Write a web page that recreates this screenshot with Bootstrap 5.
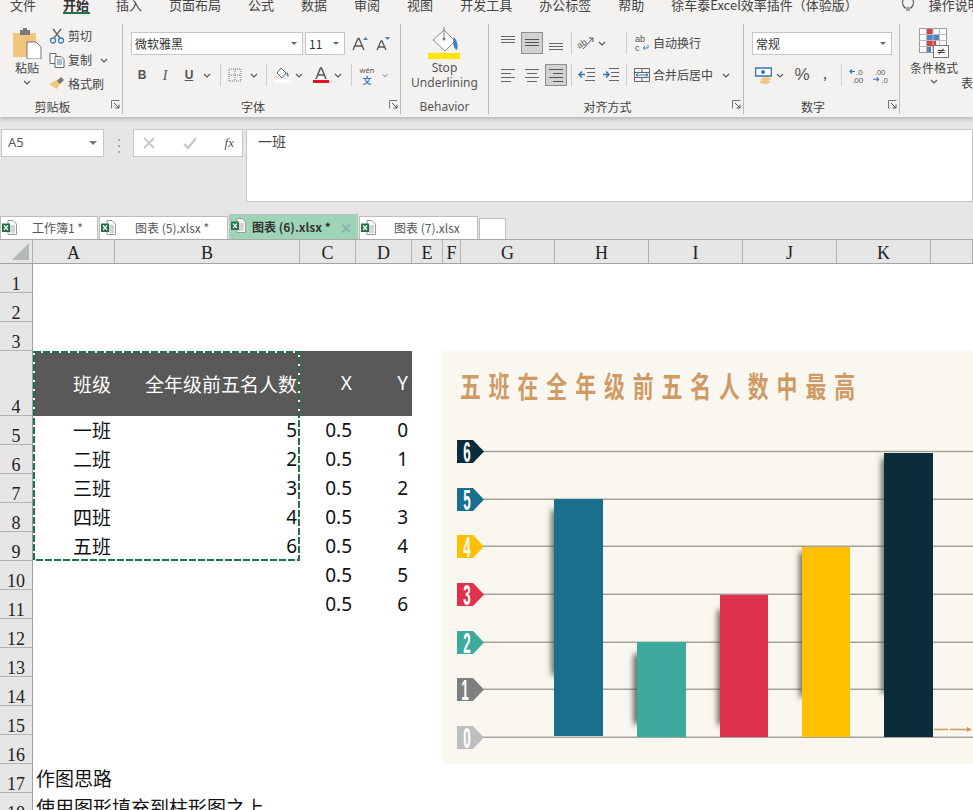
<!DOCTYPE html>
<html lang="zh">
<head>
<meta charset="utf-8">
<title>Excel</title>
<link href="https://cdn.jsdelivr.net/npm/bootstrap@5.3.0/dist/css/bootstrap.min.css" rel="stylesheet">
<style>
html,body{margin:0;height:810px;overflow:hidden;background:#fff}
body{font-family:"Noto Sans CJK SC","Liberation Sans",sans-serif;color:#444;font-size:12px}
svg{display:block}
.page{width:973px;height:810px;overflow:hidden;position:relative}
.page>div{flex:none}
.ribbon{background:#f3f2f1;height:117px;position:relative;z-index:2;box-shadow:0 2px 4px rgba(0,0,0,.22)}
.tabsrow{height:17px;overflow:hidden;padding-left:10px;padding-bottom:5px;gap:27px;font-size:13px;line-height:15px;color:#444;white-space:nowrap}
.tabsrow span,.tabsrow svg{flex:none}
.tab-on{font-weight:700;color:#333;position:relative}
.tabline{position:absolute;left:0;width:27px;top:15px;height:2px;background:#217346}
.bulb{margin-left:16px}
.tellme{margin-left:-13px}
.ribbonbody{height:100px}
.rg{margin-top:7px;height:90px;border-right:1px solid #b9b9b9;position:relative;flex:none}
.rg-clip{width:123px}.rg-font{width:278px}.rg-beh{width:88px}.rg-ali{width:255px}.rg-num{width:156px}.rg-sty{flex:1 1 auto;border-right:0}
.rlabel{position:absolute;left:0;right:0;top:76px;padding-right:17px;text-align:center;font-size:12px;line-height:14px;color:#444}
.launch{position:absolute;right:2px;top:76px}
.pastecol{width:30px;margin-left:12px}
.pastecol svg{margin-top:4px}
.pastetxt{font-size:12px;line-height:16px;margin-top:1px}
.chev{margin-top:3px}
.toolscol{margin-left:7px}
.toolrow{height:24px;white-space:nowrap}
.toolrow svg{flex:none}
.tooltxt{margin-left:3px;line-height:14px}
.sel{background:#fff;border:1px solid #c6c6c6;height:23px;padding:0 5px 0 3px;color:#333;font-size:12px;flex:none;line-height:20px}
.sel i{width:0;height:0;border-left:3.5px solid transparent;border-right:3.5px solid transparent;border-top:3.5px solid #666;display:block}
.sel-font{width:172px}.sel-size{width:40px;margin-left:2px}.sel-num{width:140px}
.r1{margin-top:8px;padding-left:8px}
.r2{margin-top:8px;padding-left:8px;height:24px}
.s2{width:2px}.s3{width:3px}.s4{width:4px}.s6{width:6px}.s7{width:7px}.s8{width:8px}.s10{width:10px}.s12{width:12px}.s16{width:16px}.s17{width:17px}.s18{width:18px}.s22{width:22px}.s24{width:24px}.s28{width:28px}.s30{width:30px}.s32{width:32px}
.slot{flex:none;display:flex;align-items:center;justify-content:center;height:22px;color:#555}
.rsep{flex:none;width:1px;height:22px;background:#cfcfcf}
.box-on{background:#d2d2d2;border:1px solid #8e8e8e}
.fb{font-weight:700;font-family:"Liberation Sans",sans-serif;font-size:12px}
.fi{font-style:italic;font-family:"Liberation Serif",serif;font-size:14px}
.fu{text-decoration:underline;font-weight:700;font-family:"Liberation Sans",sans-serif;font-size:12px}
.behicon{margin-top:2px}
.behtxt{font-family:"Noto Sans","Liberation Sans",sans-serif;font-size:12px;line-height:15px;color:#555;text-align:center}
.behlbl{font-family:"Noto Sans","Liberation Sans",sans-serif;font-size:12px;color:#555;padding-right:0}
.pct{font-size:17px;font-family:"Liberation Sans",sans-serif;color:#555}
.ali-r1{margin-top:8px;padding-left:8px;height:22px}
.ali-r2{margin-top:10px;padding-left:8px;height:22px}
.alitxt{font-size:12px;margin-left:0;white-space:nowrap;flex:none}
.s59{width:59px}
.stycol{width:60px;margin-left:4px}
.stycol svg.big{margin-top:4px}
.stytxt{white-space:nowrap;margin-top:3px;line-height:14px;color:#444}
.stynext{margin-top:50px;margin-left:-3px;white-space:nowrap}
.fbar{height:98px;background:#e6e6e6;padding-top:12px}
.namebox{width:103px;height:28px;margin-left:1px;background:#fff;border:1px solid #c6c6c6;padding:0 6px;font-size:13px;color:#555;font-family:"Noto Sans",sans-serif}
.namebox i{width:0;height:0;border-left:4px solid transparent;border-right:4px solid transparent;border-top:4px solid #777;display:block}
.vdots{width:29px;color:#aaa}
.vdots b{display:block;width:2px;height:2px;background:#aaa;margin:2px 0}
.fxbox{width:110px;height:28px;background:#fff;border:1px solid #c6c6c6;padding:0 8px}
.fxtxt{font-family:"Liberation Serif",serif;font-style:italic;font-size:13px;color:#555}
.finput{flex:1;height:73px;margin-left:3px;background:#fff;border:1px solid #c6c6c6;padding:2px 11px;font-size:14px;line-height:18px;color:#444}
.tabbar{height:25px;background:#e6e6e6;border-bottom:1px solid #a8a8a8;align-items:flex-end}
.wb{height:23px;background:#fff;border:1px solid #bdbdbd;border-bottom:0;margin-right:1px;position:relative;font-size:12px;color:#555;white-space:nowrap;flex:none;line-height:22px;font-family:"Noto Sans CJK SC",sans-serif}
.wb svg{position:absolute;left:1px;top:3px}
.wb1{width:98px;padding-left:31px}.wb2{width:129px;padding-left:35px}.wb3{width:129px;padding-left:22px;height:25px;background:#9fd5b7;font-weight:700;color:#333;line-height:24px}.wb4{width:119px;padding-left:34px}.wb5{width:27px;height:21px}
.wbx{position:absolute;right:4px;top:0;color:#8aa;font-size:14px}
.colhead{height:24px;background:#e6e6e6;border-bottom:1px solid #a3a3a3;font-family:"Liberation Serif",serif;font-size:18px;color:#222;line-height:26px;overflow:hidden}
.colhead div{flex:none;text-align:center;border-right:1px solid #b3b3b3}
.c0{width:33px;position:relative}
.ca{width:82px}.cb{width:185px}.cc{width:56px}.cd{width:56px}.ce{width:31px}.cf{width:18px}.cg{width:94px}
.corner{position:absolute;left:12px;top:3px}
.rh{width:33px;flex:none;background:#e6e6e6;border-right:1px solid #9f9f9f;border-bottom:1px solid #b3b3b3;font-family:"Liberation Serif",serif;font-size:18px;line-height:15px;color:#222;text-align:center;display:flex;align-items:flex-end;justify-content:center}
.h29{height:29px}.h65{height:65px}
.cell{flex:none;font-size:19px;line-height:28px;color:#111;white-space:nowrap;height:100%}
.hdk{background:#595959;color:#fff;display:flex;align-items:center}
.ca{padding-left:40px}
.cb.num{text-align:right;padding-right:3px}
.hdk.cb{justify-content:flex-end;padding-right:3px}
.hdk.cc,.hdk.cd{justify-content:flex-end;padding-right:4px}
.nums{font-family:"Noto Sans",sans-serif;text-align:right;padding-right:4px;line-height:29px}
.numb{font-family:"Noto Sans",sans-serif;line-height:29px}
.free{padding-left:3px;font-size:19px;line-height:27px;color:#111;white-space:nowrap}
.sel-ants{position:absolute;left:33px;top:351px;z-index:3;pointer-events:none}
.chart{position:absolute;left:442px;top:351px;z-index:1}
</style>
</head>
<body>
<svg width="0" height="0" class="position-absolute">
<defs>
<symbol id="chv" viewBox="0 0 8 5"><path d="M1 1l3 3 3-3" fill="none" stroke="#555" stroke-width="1.1"/></symbol>
<symbol id="lau" viewBox="0 0 9 9"><path d="M.5 8.5V.5h8" fill="none" stroke="#777"/><path d="M3 3l5 5M8 4.5V8H4.5" fill="none" stroke="#555"/></symbol>
<symbol id="xl" viewBox="0 0 15 15"><path d="M6 .5h5l3.5 3.5v10.5H6z" fill="#fff" stroke="#999"/><path d="M8 6h5M8 8h5M8 10h5M8 12h5" stroke="#aaa"/><rect x="0" y="3.5" width="8" height="8.5" fill="#217346"/><path d="M2 5.5l4 4.5M6 5.5l-4 4.5" stroke="#fff" stroke-width="1.2"/></symbol>
</defs>
</svg>
<div class="page d-flex flex-column">
  <div class="ribbon">
    <div class="tabsrow d-flex align-items-end">
      <span>文件</span><span class="tab-on">开始<i class="tabline"></i></span><span>插入</span><span>页面布局</span><span>公式</span><span>数据</span><span>审阅</span><span>视图</span><span>开发工具</span><span>办公标签</span><span>帮助</span><span>徐车泰Excel效率插件（体验版）</span>
      <svg class="bulb" width="14" height="15" viewBox="0 0 14 15"><path d="M4 11C2 9 1.500 7 1.500 5.500a5.500 5.500 0 0 1 11 0C12.500 7 12 9 10 11H4zM5 13h4" fill="none" stroke="#555" stroke-width="1.1"/></svg>
      <span class="tellme">操作说明</span>
    </div>
    <div class="ribbonbody d-flex">
      <div class="rg rg-clip d-flex">
        <div class="pastecol d-flex flex-column align-items-center">
          <svg width="30" height="31" viewBox="0 0 30 31"><path d="M1 5h23v24H1z" fill="#f0c67f"/><rect x="8" y="2" width="10" height="5" fill="#7a7a7a"/><rect x="11" y="0" width="4" height="3" fill="#7a7a7a"/><path d="M15 14h9l5 5v12H15z" fill="#fff" stroke="#777"/></svg>
          <div class="pastetxt">粘贴</div>
          <svg class="chev" width="8" height="5"><use href="#chv"/></svg>
        </div>
        <div class="toolscol">
          <div class="toolrow d-flex align-items-center"><svg width="16" height="16" viewBox="0 0 16 16"><path d="M4 1l7 9M12 1L5 10" stroke="#666" stroke-width="1.4"/><circle cx="4" cy="12.500" r="2.500" fill="none" stroke="#3b7fc4" stroke-width="1.300"/><circle cx="12" cy="12.500" r="2.500" fill="none" stroke="#3b7fc4" stroke-width="1.300"/></svg><span class="tooltxt">剪切</span></div>
          <div class="toolrow d-flex align-items-center"><svg width="16" height="16" viewBox="0 0 16 16"><path d="M1 1.500h6v10H1z" fill="#fff" stroke="#666"/><path d="M6 4.500h6l3 3v8H6z" fill="#fff" stroke="#666"/><path d="M8 8h5M8 10h5M8 12h5" stroke="#3b7fc4"/></svg><span class="tooltxt">复制</span><svg class="ms-2" width="8" height="5"><use href="#chv"/></svg></div>
          <div class="toolrow d-flex align-items-center"><svg width="16" height="16" viewBox="0 0 16 16"><path d="M9 3l3 3-4 7-7-4 1-2z" fill="#f0c67f"/><path d="M8 5l4-4 3 3-4 4z" fill="#777"/></svg><span class="tooltxt">格式刷</span></div>
        </div>
        <div class="rlabel">剪贴板</div>
        <svg class="launch" width="9" height="9"><use href="#lau"/></svg>
      </div>
      <div class="rg rg-font">
        <div class="r1 d-flex align-items-center">
          <div class="sel sel-font d-flex align-items-center justify-content-between"><span>微软雅黑</span><i></i></div>
          <div class="sel sel-size d-flex align-items-center justify-content-between"><span>11</span><i></i></div>
          <div class="s7"></div>
          <div class="slot s16"><svg width="16" height="16" viewBox="0 0 16 16"><path d="M1 14L6 2.500h1L12 14M3 10h7" fill="none" stroke="#555" stroke-width="1.400"/><path d="M11 4l2.500-3L16 4z" fill="#3b7fc4"/></svg></div>
          <div class="s6"></div>
          <div class="slot s16"><svg width="16" height="16" viewBox="0 0 16 16"><path d="M3 14l4-9h1l4 9M4.500 11h6" fill="none" stroke="#555" stroke-width="1.300"/><path d="M11 1l2.500 3L16 1z" fill="#3b7fc4"/></svg></div>
        </div>
        <div class="r2 d-flex align-items-center">
          <div class="slot s22 fb">B</div><div class="slot s24 fi">I</div><div class="slot s24 fu">U</div>
          <div class="slot s12"><svg width="8" height="5"><use href="#chv"/></svg></div>
          <div class="s7"></div><div class="rsep"></div>
          <div class="slot s28"><svg width="14" height="14" viewBox="0 0 14 14"><path d="M1 1h12v12H1zM7 1v12M1 7h12" fill="none" stroke="#777" stroke-dasharray="1 1"/></svg></div>
          <div class="slot s10"><svg width="8" height="5"><use href="#chv"/></svg></div>
          <div class="s7"></div><div class="rsep"></div>
          <div class="s8"></div>
          <div class="slot s16"><svg width="16" height="16" viewBox="0 0 16 16"><path d="M6 1l5 5-4 5-5-5z" fill="#fff" stroke="#666"/><path d="M12 5c2 2 2 4 1 5-1-1-2-3-1-5z" fill="#3b7fc4"/><rect y="13" width="16" height="3" fill="#fff"/></svg></div>
          <div class="slot s16"><svg width="8" height="5"><use href="#chv"/></svg></div>
          <div class="s6"></div>
          <div class="slot s16"><svg width="16" height="16" viewBox="0 0 16 16"><path d="M3 12L7.500 1h1L13 12M5 8h6" fill="none" stroke="#555" stroke-width="1.500"/><rect y="13" width="16" height="3" fill="#e81123"/></svg></div>
          <div class="slot s18"><svg width="8" height="5"><use href="#chv"/></svg></div>
          <div class="s4"></div><div class="rsep"></div>
          <div class="slot s30"><svg width="18" height="19" viewBox="0 0 18 19"><text x="9" y="7" text-anchor="middle" font-size="7.500" font-family="Noto Sans" fill="#555">wén</text><text x="9" y="18" text-anchor="middle" font-size="9" font-family="Noto Sans CJK SC" font-weight="700" fill="#3b7fc4">文</text></svg></div>
          <div class="slot s6"><svg width="8" height="5"><use href="#chv"/></svg></div>
        </div>
        <div class="rlabel">字体</div>
        <svg class="launch" width="9" height="9"><use href="#lau"/></svg>
      </div>
      <div class="rg rg-beh d-flex flex-column align-items-center">
        <svg class="behicon" width="34" height="34" viewBox="0 0 34 34"><path d="M16 4l11 11-10 10L5 14z" fill="#fff" stroke="#888"/><path d="M16 1v12" stroke="#888"/><circle cx="16" cy="13" r="1.500" fill="#777"/><path d="M26 11c4 5 4 9 3 13-3-1-5-6-3-13z" fill="#3b7fc4"/><rect x="0" y="27" width="32" height="6" fill="#ffe600"/></svg>
        <div class="behtxt">Stop<br>Underlining</div>
        <div class="rlabel behlbl">Behavior</div>
      </div>
      <div class="rg rg-ali">
        <div class="ali-r1 d-flex align-items-center">
          <div class="slot s22"><svg width="16" height="16" viewBox="0 0 16 16"><path d="M1 1.500h14M1 4.500h14M1 7.500h14" stroke="#666"/></svg></div><div class="s2"></div>
          <div class="slot s22 box-on"><svg width="16" height="16" viewBox="0 0 16 16"><path d="M1 4.500h14M1 7.500h14M1 10.500h14" stroke="#555"/></svg></div><div class="s2"></div>
          <div class="slot s22"><svg width="16" height="16" viewBox="0 0 16 16"><path d="M1 8.500h14M1 11.500h14M1 14.500h14" stroke="#666"/></svg></div>
          <div class="s4"></div><div class="rsep"></div><div class="s3"></div>
          <div class="slot s22"><svg width="18" height="18" viewBox="0 0 18 18"><text x="1" y="13" font-size="9" font-family="Liberation Sans" fill="#555" transform="rotate(-35 5 12)">ab</text><path d="M6 15L16 4M12 4h4v4" fill="none" stroke="#555"/></svg></div>
          <div class="slot s10"><svg width="8" height="5"><use href="#chv"/></svg></div><div class="s16"></div>
          <div class="s3"></div><div class="rsep"></div><div class="s4"></div>
          <div class="slot s22"><svg width="16" height="18" viewBox="0 0 16 18"><text x="1" y="8" font-size="9" font-family="Liberation Sans" fill="#555">ab</text><text x="1" y="17" font-size="9" font-family="Liberation Sans" fill="#555">c</text><path d="M14 11v3H9M11 12l-2 2 2 2" fill="none" stroke="#3b7fc4"/></svg></div>
          <span class="alitxt">自动换行</span>
        </div>
        <div class="ali-r2 d-flex align-items-center">
          <div class="slot s22"><svg width="16" height="16" viewBox="0 0 16 16"><path d="M1 2.500h14M1 6.500h10M1 10.500h14M1 14.500h10" stroke="#666"/></svg></div><div class="s2"></div>
          <div class="slot s22"><svg width="16" height="16" viewBox="0 0 16 16"><path d="M1 2.500h14M3 6.500h10M1 10.500h14M3 14.500h10" stroke="#666"/></svg></div><div class="s2"></div>
          <div class="slot s22 box-on"><svg width="16" height="16" viewBox="0 0 16 16"><path d="M1 2.500h14M5 6.500h10M1 10.500h14M5 14.500h10" stroke="#555"/></svg></div>
          <div class="s4"></div><div class="rsep"></div><div class="s3"></div>
          <div class="slot s22"><svg width="17" height="14" viewBox="0 0 17 14"><path d="M7 .5h10M9 4.500h8M9 8.500h8M7 12.500h10" stroke="#666"/><path d="M7 6.500H1M4 3.500L1 6.500l3 3" fill="none" stroke="#2f75b5" stroke-width="1.500"/></svg></div><div class="s2"></div>
          <div class="slot s22"><svg width="17" height="14" viewBox="0 0 17 14"><path d="M7 .5h10M9 4.500h8M9 8.500h8M7 12.500h10" stroke="#666"/><path d="M1 6.500h6M4 3.500l3 3-3 3" fill="none" stroke="#2f75b5" stroke-width="1.500"/></svg></div>
          <div class="s2"></div><div class="s3"></div><div class="rsep"></div><div class="s4"></div>
          <div class="slot s22"><svg width="16" height="16" viewBox="0 0 16 16"><path d="M.5 1.500h15v13H.5zM.5 5.500h15M.5 10.500h15M8 1.500v4M8 10.500v4" fill="none" stroke="#666"/><path d="M2 8h12M4 6.500L2 8l2 1.500M12 6.500L14 8l-2 1.500" fill="none" stroke="#2f75b5"/></svg></div>
          <span class="alitxt s59">合并后居中</span>
          <div class="slot s28"><svg width="8" height="5"><use href="#chv"/></svg></div>
        </div>
        <div class="rlabel">对齐方式</div>
        <svg class="launch" width="9" height="9"><use href="#lau"/></svg>
      </div>
      <div class="rg rg-num">
        <div class="r1 d-flex align-items-center">
          <div class="sel sel-num d-flex align-items-center justify-content-between"><span>常规</span><i></i></div>
        </div>
        <div class="r2 d-flex align-items-center">
          <div class="s3"></div>
          <div class="slot s17"><svg width="17" height="17" viewBox="0 0 17 17"><rect x=".5" y="1" width="16" height="8" fill="#fff" stroke="#2f75b5" stroke-width="1.500"/><circle cx="8" cy="5" r="2" fill="#2f75b5"/><ellipse cx="11" cy="12" rx="5" ry="1.800" fill="#f0c67f"/><ellipse cx="10" cy="15" rx="5" ry="1.800" fill="#f0c67f"/></svg></div>
          <div class="slot s16"><svg width="8" height="5"><use href="#chv"/></svg></div>
          <div class="slot s28 pct">%</div>
          <div class="slot s18 fb">,</div>
          <div class="s7"></div><div class="rsep"></div>
          <div class="slot s30"><svg width="17" height="15" viewBox="0 0 17 15"><text x="7" y="7" font-size="8" font-family="Liberation Sans" fill="#555">.0</text><text x="3" y="15" font-size="8" font-family="Liberation Sans" fill="#555">.00</text><path d="M6 3.500H1M3 1.500L1 3.500l2 2" fill="none" stroke="#2f75b5" stroke-width="1.200"/></svg></div>
          <div class="slot s16"><svg width="17" height="15" viewBox="0 0 17 15"><text x="3" y="7" font-size="8" font-family="Liberation Sans" fill="#555">.00</text><text x="10" y="15" font-size="8" font-family="Liberation Sans" fill="#555">.0</text><path d="M1 11.500h6M5 9.500l2 2-2 2" fill="none" stroke="#2f75b5" stroke-width="1.200"/></svg></div>
        </div>
        <div class="rlabel">数字</div>
        <svg class="launch" width="9" height="9"><use href="#lau"/></svg>
      </div>
      <div class="rg rg-sty d-flex">
        <div class="stycol d-flex flex-column align-items-center">
          <svg class="big" width="30" height="30" viewBox="0 0 30 30"><path d="M.5.500h27v24H.500z" fill="#fff" stroke="#999"/><rect x="8" y="1" width="6" height="5" fill="#d9413f"/><rect x="8" y="7" width="12" height="5" fill="#4a86c5"/><rect x="8" y="13" width="9" height="5" fill="#d9413f"/><rect x="8" y="19" width="4" height="5" fill="#4a86c5"/><path d="M7.500 0v24M14 0v24M20.500 0v24M0 6.500h27M0 12.500h27M0 18.500h27" stroke="#bbb"/><rect x="14.500" y="17.500" width="15" height="12" fill="#fff" stroke="#777"/><text x="22" y="27" text-anchor="middle" font-size="11" font-family="DejaVu Sans" fill="#444">≠</text></svg>
          <div class="stytxt">条件格式</div>
          <svg class="mt-1" width="8" height="5"><use href="#chv"/></svg>
        </div>
        <div class="stynext">表</div>
      </div>
    </div>
  </div>

  <div class="fbar d-flex align-items-start">
    <div class="namebox d-flex align-items-center justify-content-between"><span>A5</span><i></i></div>
    <div class="vdots d-flex flex-column align-items-center justify-content-center h-auto pt-2"><b></b><b></b><b></b></div>
    <div class="fxbox d-flex align-items-center justify-content-between">
      <svg width="14" height="14" viewBox="0 0 14 14"><path d="M2 2l10 10M12 2L2 12" stroke="#c8c8c8" stroke-width="1.800"/></svg>
      <svg width="16" height="14" viewBox="0 0 16 14"><path d="M2 8l4 4 8-10" fill="none" stroke="#c8c8c8" stroke-width="2.200"/></svg>
      <span class="fxtxt">fx</span>
    </div>
    <div class="finput">一班</div>
  </div>

  <div class="tabbar d-flex">
    <div class="wb wb1"><svg width="15" height="15"><use href="#xl"/></svg>工作簿1 *</div>
    <div class="wb wb2"><svg width="15" height="15"><use href="#xl"/></svg>图表 (5).xlsx *</div>
    <div class="wb wb3"><svg width="15" height="15"><use href="#xl"/></svg>图表 (6).xlsx *<span class="wbx">×</span></div>
    <div class="wb wb4"><svg width="15" height="15"><use href="#xl"/></svg>图表 (7).xlsx</div>
    <div class="wb wb5"></div>
  </div>

  <div class="colhead d-flex">
    <div class="c0"><svg class="corner" width="17" height="17" viewBox="0 0 17 17"><path d="M17 0v17H0z" fill="#b4b8b6"/></svg></div>
    <div class="ca p-0">A</div><div class="cb">B</div><div class="cc">C</div><div class="cd">D</div><div class="ce">E</div><div class="cf">F</div><div class="cg">G</div><div class="cg">H</div><div class="cg">I</div><div class="cg">J</div><div class="cg">K</div><div class="flex-grow-1"></div>
  </div>

  <div class="h29 d-flex"><div class="rh">1</div></div>
  <div class="h29 d-flex"><div class="rh">2</div></div>
  <div class="h29 d-flex"><div class="rh">3</div></div>
  <div class="h65 d-flex"><div class="rh">4</div><div class="cell hdk ca">班级</div><div class="cell hdk cb">全年级前五名人数</div><div class="cell hdk cc numb">X</div><div class="cell hdk cd numb">Y</div></div>
  <div class="h29 d-flex"><div class="rh">5</div><div class="cell ca">一班</div><div class="cell cb num numb">5</div><div class="cell cc nums">0.5</div><div class="cell cd nums">0</div></div>
  <div class="h29 d-flex"><div class="rh">6</div><div class="cell ca">二班</div><div class="cell cb num numb">2</div><div class="cell cc nums">0.5</div><div class="cell cd nums">1</div></div>
  <div class="h29 d-flex"><div class="rh">7</div><div class="cell ca">三班</div><div class="cell cb num numb">3</div><div class="cell cc nums">0.5</div><div class="cell cd nums">2</div></div>
  <div class="h29 d-flex"><div class="rh">8</div><div class="cell ca">四班</div><div class="cell cb num numb">4</div><div class="cell cc nums">0.5</div><div class="cell cd nums">3</div></div>
  <div class="h29 d-flex"><div class="rh">9</div><div class="cell ca">五班</div><div class="cell cb num numb">6</div><div class="cell cc nums">0.5</div><div class="cell cd nums">4</div></div>
  <div class="h29 d-flex"><div class="rh">10</div><div class="cell ca"></div><div class="cell cb"></div><div class="cell cc nums">0.5</div><div class="cell cd nums">5</div></div>
  <div class="h29 d-flex"><div class="rh">11</div><div class="cell ca"></div><div class="cell cb"></div><div class="cell cc nums">0.5</div><div class="cell cd nums">6</div></div>
  <div class="h29 d-flex"><div class="rh">12</div></div>
  <div class="h29 d-flex"><div class="rh">13</div></div>
  <div class="h29 d-flex"><div class="rh">14</div></div>
  <div class="h29 d-flex"><div class="rh">15</div></div>
  <div class="h29 d-flex"><div class="rh">16</div></div>
  <div class="h29 d-flex"><div class="rh">17</div><div class="free">作图思路</div></div>
  <div class="h29 d-flex"><div class="rh">18</div><div class="free">使用图形填充到柱形图之上</div></div>

  <svg class="sel-ants" width="268" height="211" viewBox="0 0 268 211"><rect x="1" y="1" width="265" height="208" fill="none" stroke="#fff" stroke-width="2"/><rect x="1" y="1" width="265" height="208" fill="none" stroke="#217346" stroke-width="2" stroke-dasharray="7 2"/></svg>

  <svg class="chart" width="531" height="413" viewBox="442 351 531 413">
    <defs>
      <filter id="sh" x="-5%" y="-10%" width="110%" height="120%"><feGaussianBlur stdDeviation="3"/></filter>
    </defs>
    <rect x="442" y="351" width="531" height="413" fill="#faf7f0"/>
    <text x="460" y="398" transform="translate(460 0) scale(.72 1) translate(-460 0)" font-family="Noto Sans CJK SC" font-weight="700" font-size="29" letter-spacing="11" fill="#cf9a64">五班在全年级前五名人数中最高</text>
    <g stroke="#a5a29c" stroke-width="1.400">
      <path d="M483 451.500H973M483 499.300H973M483 546.300H973M483 594.300H973M483 642.300H973M483 689.300H973M483 737.300H973"/>
    </g>
    <g fill="#444" filter="url(#sh)">
      <rect x="552" y="510" width="6" height="165"/>
      <rect x="634" y="654" width="7" height="70"/>
      <rect x="718" y="610" width="6" height="115"/>
      <rect x="800" y="552" width="6" height="145"/>
      <rect x="882" y="458" width="6" height="235"/>
    </g>
    <rect x="554" y="499" width="49" height="237" fill="#1a6f8f"/>
    <rect x="637" y="642" width="49" height="95" fill="#3eaa9d"/>
    <rect x="720" y="595" width="48" height="142" fill="#e1304c"/>
    <rect x="802" y="547" width="48" height="190" fill="#ffc000"/>
    <rect x="884" y="453" width="49" height="284" fill="#0b2d3b"/>
    <path d="M934 729.500h14M950 729.500h20" stroke="#cf9a64" stroke-width="1.300"/>
    <path d="M967 727l5 2.500-5 2.500z" fill="#cf9a64"/>
    <g font-family="Liberation Sans" font-weight="700" font-size="29" fill="#fff" text-anchor="middle">
      <polygon points="457,440 473,440 484,451.500 473,463 457,463" fill="#0b2d3b"/>
      <polygon points="457,488 473,488 484,499.500 473,511 457,511" fill="#1a6f8f"/>
      <polygon points="457,535 473,535 484,546.500 473,558 457,558" fill="#ffc000"/>
      <polygon points="457,583 473,583 484,594.500 473,606 457,606" fill="#e1304c"/>
      <polygon points="457,631 473,631 484,642.500 473,654 457,654" fill="#3eaa9d"/>
      <polygon points="457,678 473,678 484,689.500 473,701 457,701" fill="#7f7f7f"/>
      <polygon points="457,726 473,726 484,737.500 473,749 457,749" fill="#bfbfbf"/>
      <text transform="translate(467 462) scale(.46 1)">6</text>
      <text transform="translate(467 510) scale(.46 1)">5</text>
      <text transform="translate(467 557) scale(.46 1)">4</text>
      <text transform="translate(467 605) scale(.46 1)">3</text>
      <text transform="translate(467 653) scale(.46 1)">2</text>
      <text transform="translate(465 700) scale(.46 1)">1</text>
      <text transform="translate(467 748) scale(.46 1)">0</text>
    </g>
  </svg>
</div>
<script src="https://cdn.jsdelivr.net/npm/bootstrap@5.3.0/dist/js/bootstrap.bundle.min.js"></script>
</body>
</html>
